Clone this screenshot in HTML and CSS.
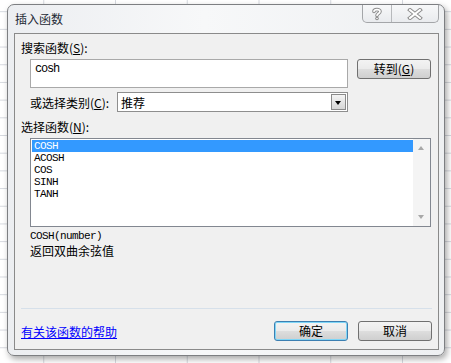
FILE: index.html
```html
<!DOCTYPE html>
<html lang="zh-CN">

<head>
    <meta charset="UTF-8">
    <meta name="viewport" content="width=device-width, initial-scale=1.0">
    <title>插入函数</title>
    <link rel="stylesheet" href="styles.css">
</head>

<body>

    <div class="dialog">
        <div class="titlebar">
            <span class="title">插入函数</span>
            <div class="caption-buttons">
                <div class="caption-btn help-btn">
                    <svg width="12" height="14" viewBox="0 0 12 14">
                        <path d="M3 4.5 C3 2 9 2 9 4.5 C9 6.5 6 6.5 6 8.5" fill="none" stroke="#8c8c8c" stroke-width="3.6" stroke-linecap="round"/>
                        <circle cx="6" cy="11.5" r="1.8" fill="#8c8c8c"/>
                        <path d="M3 4.5 C3 2 9 2 9 4.5 C9 6.5 6 6.5 6 8.5" fill="none" stroke="#fff" stroke-width="1.6" stroke-linecap="round"/>
                        <circle cx="6" cy="11.5" r="0.8" fill="#fff"/>
                    </svg>
                </div>
                <div class="caption-btn close-btn">
                    <svg width="16" height="12" viewBox="0 0 16 12">
                        <path d="M3 2 L13 10 M13 2 L3 10" fill="none" stroke="#8c8c8c" stroke-width="4" stroke-linecap="square"/>
                        <path d="M3 2 L13 10 M13 2 L3 10" fill="none" stroke="#fff" stroke-width="2" stroke-linecap="square"/>
                    </svg>
                </div>
            </div>
        </div>

        <div class="panel">
            <div class="label first-label">搜索函数(<u>S</u>):</div>

            <div class="search-row">
                <div class="search-box">cosh</div>
                <button class="btn">转到(<u>G</u>)</button>
            </div>

            <div class="category-row">
                <span class="category-label">或选择类别(<u>C</u>):</span>
                <div class="select">
                    <span class="select-value">推荐</span>
                    <span class="select-arrow"></span>
                </div>
            </div>

            <div class="label list-label">选择函数(<u>N</u>):</div>

            <div class="listbox">
                <ul class="list-items">
                    <li class="selected">COSH</li>
                    <li>ACOSH</li>
                    <li>COS</li>
                    <li>SINH</li>
                    <li>TANH</li>
                </ul>
                <div class="scrollbar">
                    <span class="arrow-up"></span>
                    <span class="arrow-down"></span>
                </div>
            </div>

            <div class="signature">COSH(number)</div>
            <div class="description">返回双曲余弦值</div>

            <div class="separator"></div>

            <div class="footer">
                <a href="#" class="help-link">有关该函数的帮助</a>
                <div class="footer-buttons">
                    <button class="btn default-btn">确定</button>
                    <button class="btn">取消</button>
                </div>
            </div>
        </div>
    </div>

</body>

</html>
```

FILE: styles.css
```css
html,
body {
    margin: 0;
    padding: 0;
}

body {
    width: 451px;
    height: 363px;
    box-sizing: border-box;
    padding: 4px 0 0 7px;
    overflow: hidden;
    font-family: "Noto Sans CJK SC", "Liberation Sans", sans-serif;
    font-size: 12px;
    color: #000;
    background-color: #fff;
    background-image:
        linear-gradient(to right, #d6d9df 1px, transparent 1px),
        linear-gradient(to bottom, #d6d9df 1px, transparent 1px);
    background-size: 71.75px 17.7px;
    background-position: 115px 135px;
}

.dialog {
    width: 438px;
    height: 352px;
    box-sizing: border-box;
    border: 1px solid #7d7f82;
    border-radius: 7px;
    padding: 0 5px 5px 6px;
    display: flex;
    flex-direction: column;
    background: linear-gradient(to right, #eceef1 0%, #f7f8f9 45%, #eef0f2 100%);
    box-shadow: 2px 3px 6px rgba(0, 0, 0, 0.35);
}

.titlebar {
    height: 28px;
    display: flex;
    align-items: flex-start;
}

.title {
    margin: 6px 0 0 1px;
    line-height: 16px;
    color: #1e2a36;
}

.caption-buttons {
    margin-left: auto;
    display: flex;
    height: 17px;
    border: 1px solid #a4a6a9;
    border-top: none;
    border-radius: 0 0 5px 5px;
    background: linear-gradient(#f7f8f9, #e9ebee);
}

.caption-btn {
    display: flex;
    align-items: center;
    justify-content: center;
}

.help-btn {
    width: 28px;
    border-right: 1px solid #b7b9bc;
}

.close-btn {
    width: 46px;
}

.panel {
    flex: 1;
    border: 1px solid #8a8a8a;
    background: #f0f0f0;
    padding: 0 6px;
}

.label {
    line-height: 16px;
}

.first-label {
    margin-top: 6px;
}

.search-row {
    display: flex;
    align-items: flex-start;
    margin: 3px 0 0 9px;
}

.search-box {
    width: 318px;
    height: 29px;
    box-sizing: border-box;
    border: 1px solid #a9a9a9;
    background: #fff;
    padding: 2px 0 0 4px;
    font-family: "Liberation Mono", monospace;
    font-size: 12px;
    letter-spacing: -1.2px;
    line-height: 15px;
}

.btn {
    width: 74px;
    height: 20px;
    box-sizing: border-box;
    padding: 0;
    border: 1px solid #707070;
    border-radius: 3px;
    background: linear-gradient(#f3f3f3 0%, #ebebeb 48%, #dddddd 52%, #cfcfcf 100%);
    font-family: "Noto Sans CJK SC", "Liberation Sans", sans-serif;
    font-size: 12px;
    line-height: 16px;
    color: #000;
}

.search-row .btn {
    margin-left: 9px;
}

.category-row {
    display: flex;
    align-items: center;
    margin: 4px 0 0 9px;
    height: 20px;
}

.category-label {
    width: 87px;
}

.select {
    width: 231px;
    height: 20px;
    box-sizing: border-box;
    border: 1px solid #8e8e8e;
    background: #fff;
    display: flex;
    align-items: center;
}

.select-value {
    padding-left: 3px;
    flex: 1;
}

.select-arrow {
    width: 15px;
    height: 16px;
    margin-right: 1px;
    box-sizing: border-box;
    border: 1px solid #8a8a8a;
    background: linear-gradient(#f4f4f4, #d6d6d6);
    position: relative;
}

.select-arrow::after {
    content: "";
    position: absolute;
    left: 3px;
    top: 6px;
    border-left: 3.5px solid transparent;
    border-right: 3.5px solid transparent;
    border-top: 4px solid #000;
}

.list-label {
    margin-top: 7px;
}

.listbox {
    margin: 3px 0 0 9px;
    width: 401px;
    height: 89px;
    box-sizing: border-box;
    border: 1px solid #828790;
    background: #fff;
    display: flex;
}

.list-items {
    list-style: none;
    margin: 0;
    padding: 1px 0 0 1px;
    flex: 1;
    font-family: "Liberation Mono", monospace;
    font-size: 11px;
    letter-spacing: -0.6px;
}

.list-items li {
    height: 12px;
    line-height: 12px;
    padding-left: 2px;
}

.list-items .selected {
    background: #3399ff;
    color: #fff;
}

.scrollbar {
    width: 17px;
    background: #f4f4f4;
    position: relative;
}

.arrow-up,
.arrow-down {
    position: absolute;
    left: 5px;
    border-left: 3.5px solid transparent;
    border-right: 3.5px solid transparent;
}

.arrow-up {
    top: 7px;
    border-bottom: 4px solid #a8a8a8;
}

.arrow-down {
    bottom: 7px;
    border-top: 4px solid #a8a8a8;
}

.signature {
    margin: 3px 0 0 9px;
    line-height: 13px;
    font-family: "Liberation Mono", monospace;
    font-size: 11px;
    letter-spacing: -0.6px;
}

.description {
    margin-left: 9px;
    line-height: 15px;
}

.separator {
    margin-top: 50px;
    border-top: 1px solid #d6e0ea;
}

.footer {
    margin-top: 12px;
    display: flex;
    align-items: center;
}

.help-link {
    color: #0000ff;
    text-decoration: underline;
}

.footer-buttons {
    margin-left: auto;
    display: flex;
    gap: 10px;
}

.default-btn {
    border-color: #3c7fb1;
    box-shadow: inset 0 0 0 1px #7fd6f7;
}
```
